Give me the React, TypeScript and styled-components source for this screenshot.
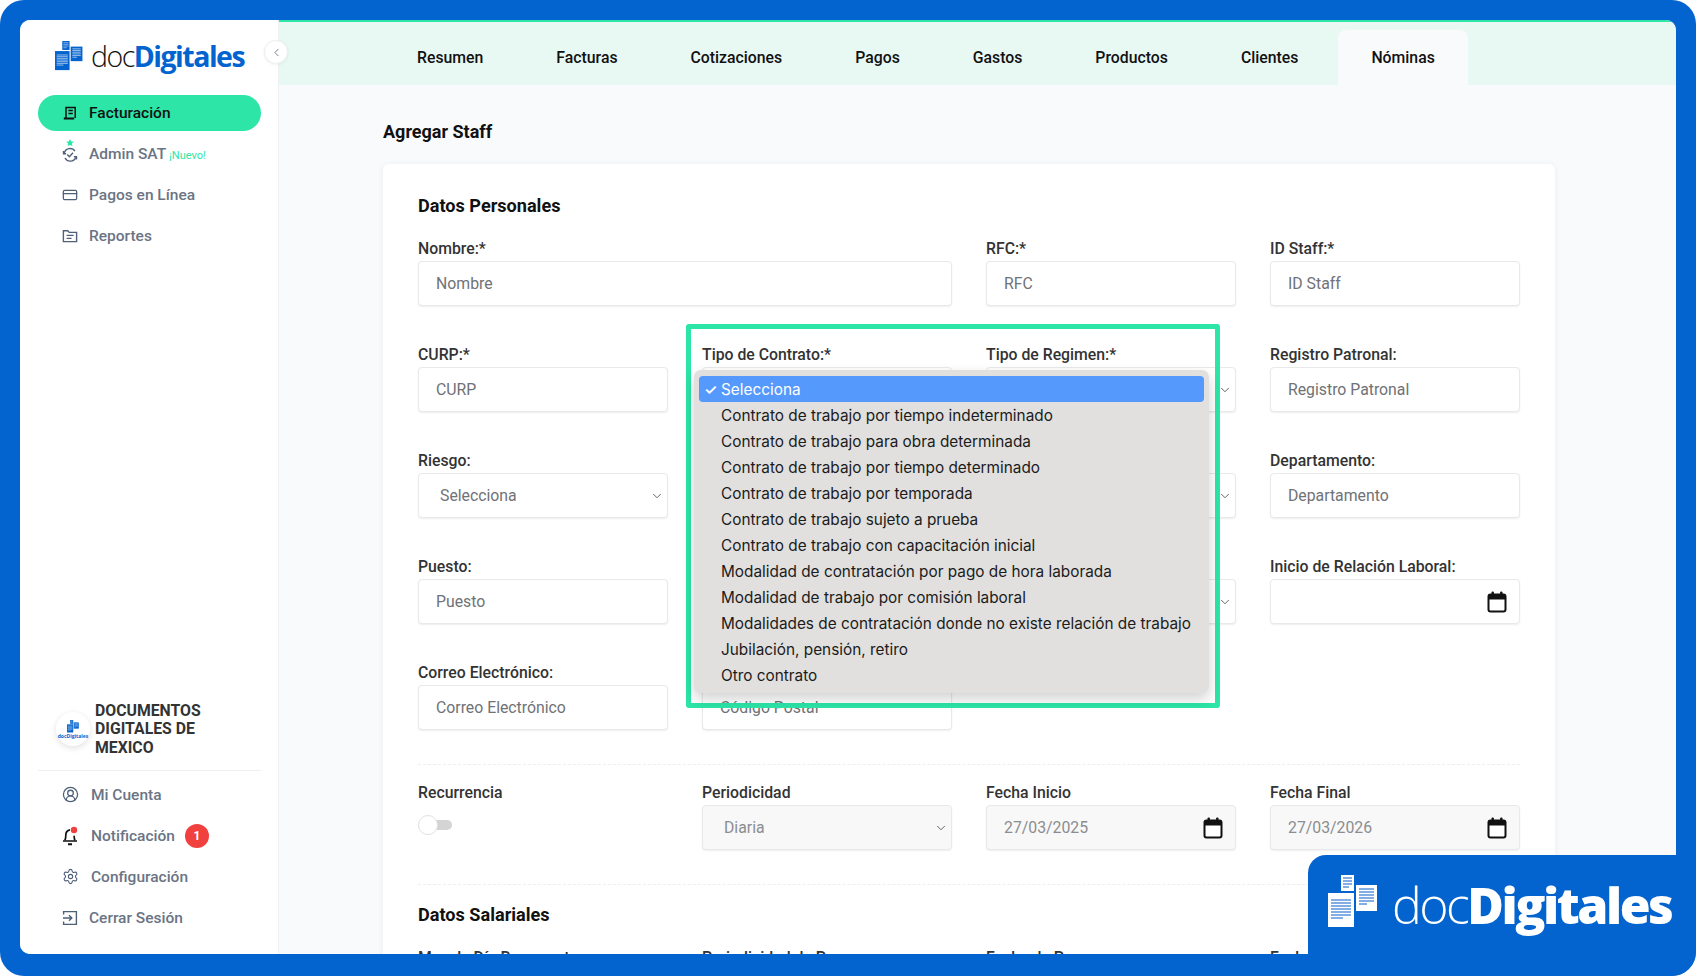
import { ReactNode } from "react";
import styled, { createGlobalStyle } from "styled-components";
import { ChevronDown, ChevronLeft, CircleUserRound, CreditCard, Settings } from "lucide-react";

const GlobalStyle = createGlobalStyle`
  html, body {
    margin: 0;
    padding: 0;
    background: #fff;
    font-family: Roboto, "Liberation Sans", sans-serif;
  }
  * {
    box-sizing: border-box;
  }
  svg {
    flex-shrink: 0;
  }
`;

const BLUE = "#0364CF";
const GREEN = "#2CE5A7";
const SLATE = "#4f6079";

const contractTypes = [
  "Contrato de trabajo por tiempo indeterminado",
  "Contrato de trabajo para obra determinada",
  "Contrato de trabajo por tiempo determinado",
  "Contrato de trabajo por temporada",
  "Contrato de trabajo sujeto a prueba",
  "Contrato de trabajo con capacitación inicial",
  "Modalidad de contratación por pago de hora laborada",
  "Modalidad de trabajo por comisión laboral",
  "Modalidades de contratación donde no existe relación de trabajo",
  "Jubilación, pensión, retiro",
  "Otro contrato",
];

function DocsMark({ light, size }: { light?: boolean; size: number }) {
  const sheet = light ? "#ffffff" : BLUE;
  const line = light ? "#5b93dd" : "#9cc0ea";
  return (
    <svg width={size} height={size * 1.06} viewBox="0 0 50 53" fill="none">
      <rect x="13" y="0" width="13" height="16" fill={sheet} />
      <path d="M15 3h9M15 6h9M15 9h9M15 12h6" stroke={line} strokeWidth="1.4" />
      <rect x="0" y="18" width="26" height="34" fill={sheet} />
      <path d="M3 25h20M3 28h20M3 31h20M3 34h20M3 37h20M3 40h20M3 43h12" stroke={line} strokeWidth="1.7" />
      <rect x="28" y="10" width="21" height="26" fill={sheet} />
      <path d="M31 14h15M31 17h15M31 20h15M31 23h15M31 26h15M31 29h8" stroke={line} strokeWidth="1.7" />
    </svg>
  );
}

function CalendarIcon() {
  return (
    <svg width="20" height="22" viewBox="0 0 20 22" fill="none">
      <rect x="1.5" y="3.5" width="17" height="17" rx="2" stroke="#111" strokeWidth="2" fill="#fff" />
      <path d="M1.5 5.5a2 2 0 0 1 2-2h13a2 2 0 0 1 2 2v3h-17z" fill="#111" />
      <rect x="4.5" y="0.5" width="2.4" height="5" rx="1" fill="#111" />
      <rect x="13.1" y="0.5" width="2.4" height="5" rx="1" fill="#111" />
    </svg>
  );
}

function InvoiceIcon() {
  return (
    <svg width="16" height="16" viewBox="0 0 16 16" fill="none" stroke="#111" strokeWidth="1.5">
      <path d="M4 13V2.6h9.2V13" />
      <path d="M1.8 13.6h10.4" strokeWidth="2" />
      <path d="M6.4 5.6h4.4M6.4 8.4h4.4" />
    </svg>
  );
}

function SatIcon() {
  return (
    <svg width="16" height="24" viewBox="0 0 16 24" fill="none" stroke={SLATE} strokeWidth="1.4">
      <path d="M8 0l1.2 2.4 2.6.3-1.9 1.8.5 2.6L8 5.9l-2.4 1.2.5-2.6-1.9-1.8 2.6-.3z" fill={GREEN} stroke="none" />
      <path d="M2.2 14.5A6 6 0 0 1 13 12M13.8 18.5A6 6 0 0 1 3 19" />
      <path d="M5.2 15.6l2.2 2.2 3.6-4" />
      <path d="M1.5 12v2.8h2.6M14.5 20.5v-2.8h-2.6" />
    </svg>
  );
}

function FolderIcon() {
  return (
    <svg width="16" height="14" viewBox="0 0 16 14" fill="none" stroke={SLATE} strokeWidth="1.4">
      <path d="M1.4 12.6V1.8h4.4l1.4 1.6h7.4v9.2z" />
      <path d="M4.6 6.4h7M4.6 9.4h5" />
    </svg>
  );
}

function BellIcon() {
  return (
    <svg width="16" height="20" viewBox="0 0 16 20" fill="none" stroke="#111" strokeWidth="1.7">
      <path d="M2.8 14.4c1-1.6 1-3.2 1-5.2 0-2.8 1.6-5 4.2-5.4M13 14.4c-.9-1.4-.9-2.8-.9-4.6" />
      <path d="M1 15h14" />
      <path d="M6 18.2h4" strokeWidth="2" />
      <circle cx="12" cy="4" r="3.2" fill="#F0413F" stroke="none" />
    </svg>
  );
}

function LogoutIcon() {
  return (
    <svg width="16" height="16" viewBox="0 0 16 16" fill="none" stroke={SLATE} strokeWidth="1.4">
      <path d="M1.6 4.6V1.6h12.8v12.8H1.6v-3" />
      <path d="M1 8h8.6M7 5.2L9.8 8 7 10.8" />
    </svg>
  );
}

const Frame = styled.div`
  position: relative;
  width: 1696px;
  height: 976px;
  padding: 20px 20px 22px 20px;
  background: ${BLUE};
  border-radius: 24px;
  overflow: hidden;
`;

const Window = styled.div`
  display: flex;
  height: 100%;
  border-radius: 10px;
  overflow: hidden;
  background: #f9fafc;
`;

const Sidebar = styled.aside`
  position: relative;
  display: flex;
  flex-direction: column;
  flex: 0 0 259px;
  padding: 18px 17px 16px 18px;
  background: #fff;
  border-right: 1px solid #eef0f3;
`;

const Brand = styled.div`
  display: flex;
  align-items: center;
  gap: 8px;
  height: 36px;
  padding-left: 17px;
  margin-bottom: 21px;
`;

const BrandText = styled.span`
  font-family: "Open Sans", sans-serif;
  font-size: 28.5px;
  line-height: 36px;
  letter-spacing: -1.5px;
  color: #111;
  font-weight: 300;
`;

const BrandStrong = styled.span`
  font-weight: 700;
  color: ${BLUE};
`;

const CollapseButton = styled.button`
  position: absolute;
  z-index: 2;
  top: 20px;
  right: -10px;
  display: flex;
  align-items: center;
  justify-content: center;
  width: 24px;
  height: 24px;
  padding: 0;
  border: 1px solid #eceef1;
  border-radius: 50%;
  background: #fff;
  color: #5b6470;
  box-shadow: 0 1px 3px rgba(0, 0, 0, 0.06);
`;

const NavList = styled.nav`
  display: flex;
  flex-direction: column;
`;

const NavItem = styled.a<{ $active?: boolean; $gap?: number }>`
  display: flex;
  align-items: center;
  height: ${(p) => (p.$active ? "36px" : "41px")};
  margin-bottom: ${(p) => (p.$active ? "2.5px" : "0")};
  padding-left: 25px;
  gap: ${(p) => p.$gap ?? 12}px;
  border-radius: 18px;
  background: ${(p) => (p.$active ? GREEN : "transparent")};
  color: ${(p) => (p.$active ? "#111" : "#6a7484")};
  font-size: 15.5px;
  font-weight: 500;
`;

const NavIcon = styled.span<{ $lift?: number }>`
  display: flex;
  align-items: center;
  justify-content: center;
  width: 14px;
  margin-bottom: ${(p) => p.$lift ?? 0}px;
  color: ${SLATE};
`;

const NewTag = styled.small`
  margin-left: -9px;
  margin-top: 3px;
  font-size: 11px;
  font-weight: 400;
  color: ${GREEN};
`;

const Spacer = styled.div`
  flex: 1;
`;

const Company = styled.div`
  display: flex;
  align-items: center;
  gap: 5px;
  padding: 0 0 13px 18px;
  border-bottom: 1px solid #eef0f3;
  margin-bottom: 3px;
`;

const CompanyLogo = styled.div`
  display: flex;
  flex-direction: column;
  align-items: center;
  justify-content: center;
  flex: 0 0 34px;
  height: 34px;
  border-radius: 50%;
  background: #fff;
  box-shadow: 0 2px 6px rgba(0, 0, 0, 0.12);
  font-family: "Open Sans", sans-serif;
  font-size: 5px;
  line-height: 6px;
  font-weight: 700;
  color: ${BLUE};
`;

const CompanyName = styled.div`
  font-size: 15.8px;
  line-height: 18.5px;
  font-weight: 700;
  color: #333;
`;

const Badge = styled.span`
  display: flex;
  align-items: center;
  justify-content: center;
  width: 24px;
  height: 24px;
  margin-left: -4px;
  border-radius: 50%;
  background: #f0413f;
  color: #fff;
  font-size: 12px;
  font-weight: 700;
`;

const Main = styled.main`
  position: relative;
  display: flex;
  flex-direction: column;
  flex: 1;
  min-width: 0;
  border-top: 2px solid ${GREEN};
  overflow: hidden;
`;

const TabBar = styled.div`
  display: flex;
  align-items: flex-end;
  gap: 7px;
  flex: 0 0 63px;
  padding-left: 105px;
  background: #e8f8f3;
`;

const Tab = styled.a<{ $active?: boolean }>`
  display: flex;
  align-items: center;
  justify-content: center;
  height: 55px;
  padding: 0 33px 0;
  border-radius: 8px 8px 0 0;
  background: ${(p) => (p.$active ? "#f9fafc" : "transparent")};
  color: #111;
  font-size: 15.8px;
  font-weight: 500;
`;

const Content = styled.div`
  padding: 35px 0 0 104px;
`;

const PageTitle = styled.h1`
  margin: 0 0 21px;
  font-size: 18px;
  line-height: 23px;
  font-weight: 700;
  color: #111;
`;

const Card = styled.section`
  position: relative;
  width: 1172px;
  padding: 30px 35px 40px;
  background: #fff;
  border-radius: 6px;
  box-shadow: 0 1px 6px rgba(30, 40, 60, 0.07);
`;

const SectionTitle = styled.h2`
  margin: 0 0 21px;
  font-size: 18.1px;
  line-height: 24px;
  font-weight: 700;
  color: #111;
`;

const FormGrid = styled.div`
  display: grid;
  grid-template-columns: repeat(4, 250px);
  column-gap: 34px;
  row-gap: 39px;
`;

const Field = styled.div<{ $span?: number }>`
  grid-column: span ${(p) => p.$span ?? 1};
  min-width: 0;
`;

const Label = styled.label`
  display: block;
  height: 20px;
  margin-bottom: 2px;
  font-size: 15.8px;
  line-height: 20px;
  font-weight: 500;
  color: #333;
  white-space: nowrap;
`;

const Control = styled.div<{ $disabled?: boolean; $select?: boolean }>`
  display: flex;
  align-items: center;
  height: 45px;
  padding: 0 ${(p) => (p.$select ? 3 : 12)}px 0 ${(p) => (p.$select ? 21 : 17)}px;
  border: 1px solid #e8e9eb;
  border-radius: 4px;
  background: ${(p) => (p.$disabled ? "#f8f8f8" : "#fff")};
  box-shadow: 0 1px 2px rgba(0, 0, 0, 0.07);
  color: ${(p) => (p.$disabled ? "#8b8d90" : "#6f7276")};
  font-size: 15.8px;

  svg {
    margin-left: auto;
  }
`;

const ToggleTrack = styled.div`
  position: relative;
  width: 34px;
  height: 10px;
  margin-top: 17px;
  border-radius: 5px;
  background: #d4d4d4;
`;

const ToggleKnob = styled.span`
  position: absolute;
  top: -5px;
  left: 0;
  width: 20px;
  height: 20px;
  border: 1px solid #e2e2e2;
  border-radius: 50%;
  background: #fff;
`;

const Divider = styled.hr`
  margin: 34px 0 18px;
  border: none;
  border-top: 1px dashed #eceef0;
`;

const HighlightBox = styled.div`
  position: absolute;
  left: 303px;
  top: 160px;
  width: 534px;
  height: 384px;
  border: 5px solid ${GREEN};
  border-radius: 3px;
  pointer-events: none;
`;

const Dropdown = styled.ul`
  position: absolute;
  left: 311px;
  top: 206px;
  width: 515px;
  height: 323px;
  margin: 0;
  padding: 6px 5px;
  list-style: none;
  background: #e1e0de;
  border-radius: 7px;
  box-shadow: 0 6px 14px rgba(0, 0, 0, 0.18);
`;

const Option = styled.li<{ $selected?: boolean }>`
  position: relative;
  height: 26px;
  padding-left: 22px;
  border-radius: 4px;
  background: ${(p) => (p.$selected ? "#5599fc" : "transparent")};
  color: ${(p) => (p.$selected ? "#fff" : "#1b1b1b")};
  font-family: Inter, sans-serif;
  font-size: 15.35px;
  line-height: 28px;
  white-space: nowrap;
`;

const Check = styled.span`
  position: absolute;
  left: 5px;
  top: 0;
  font-size: 15px;
  font-weight: 600;
`;

const Promo = styled.div`
  position: absolute;
  right: 0;
  bottom: 0;
  display: flex;
  align-items: flex-start;
  gap: 14px;
  width: 388px;
  height: 121px;
  padding: 20px 0 0 20px;
  background: ${BLUE};
  border-radius: 18px 0 24px 0;
`;

const PromoText = styled.span`
  margin-top: -3px;
  font-family: "Open Sans", sans-serif;
  font-size: 50px;
  line-height: 66px;
  letter-spacing: -2.5px;
  font-weight: 300;
  color: #fff;
`;

const PromoStrong = styled.span`
  font-weight: 800;
`;

function TextField({ label, placeholder, span }: { label: string; placeholder?: string; span?: number }) {
  return (
    <Field $span={span}>
      <Label>{label}</Label>
      <Control>{placeholder ?? label.replace(/:\*?$/, "")}</Control>
    </Field>
  );
}

function SelectField({ label, value, disabled }: { label?: string; value?: string; disabled?: boolean }) {
  return (
    <Field>
      <Label>{label ?? "\u00a0"}</Label>
      <Control $select $disabled={disabled}>
        {value ?? ""}
        <ChevronDown size={14} strokeWidth={1.4} color="#444" />
      </Control>
    </Field>
  );
}

function DateField({ label, value, disabled }: { label: string; value?: string; disabled?: boolean }) {
  return (
    <Field>
      <Label>{label}</Label>
      <Control $disabled={disabled}>
        {value ?? ""}
        <CalendarIcon />
      </Control>
    </Field>
  );
}

function SideLink({ icon, children, gap, lift }: { icon: ReactNode; children: ReactNode; gap?: number; lift?: number }) {
  return (
    <NavItem $gap={gap}>
      <NavIcon $lift={lift}>{icon}</NavIcon>
      {children}
    </NavItem>
  );
}

export default function App() {
  const tabs = ["Resumen", "Facturas", "Cotizaciones", "Pagos", "Gastos", "Productos", "Clientes", "Nóminas"];

  return (
    <Frame>
      <GlobalStyle />
      <Window>
        <Sidebar>
          <Brand>
            <DocsMark size={28} />
            <BrandText>
              doc<BrandStrong>Digitales</BrandStrong>
            </BrandText>
          </Brand>
          <CollapseButton>
            <ChevronLeft size={13} strokeWidth={1.5} />
          </CollapseButton>
          <NavList>
            <NavItem $active>
              <NavIcon>
                <InvoiceIcon />
              </NavIcon>
              Facturación
            </NavItem>
            <SideLink icon={<SatIcon />} lift={6}>
              Admin SAT <NewTag>¡Nuevo!</NewTag>
            </SideLink>
            <SideLink icon={<CreditCard size={16} strokeWidth={1.9} />}>Pagos en Línea</SideLink>
            <SideLink icon={<FolderIcon />}>Reportes</SideLink>
          </NavList>
          <Spacer />
          <Company>
            <CompanyLogo>
              <DocsMark size={12} />
              docDigitales
            </CompanyLogo>
            <CompanyName>
              DOCUMENTOS
              <br />
              DIGITALES DE
              <br />
              MEXICO
            </CompanyName>
          </Company>
          <NavList>
            <SideLink icon={<CircleUserRound size={17} strokeWidth={1.8} />} gap={14}>
              Mi Cuenta
            </SideLink>
            <SideLink icon={<BellIcon />} gap={14}>
              Notificación <Badge>1</Badge>
            </SideLink>
            <SideLink icon={<Settings size={17} strokeWidth={1.6} />} gap={14}>
              Configuración
            </SideLink>
            <SideLink icon={<LogoutIcon />}>Cerrar Sesión</SideLink>
          </NavList>
        </Sidebar>
        <Main>
          <TabBar>
            {tabs.map((t) => (
              <Tab key={t} $active={t === "Nóminas"}>
                {t}
              </Tab>
            ))}
          </TabBar>
          <Content>
            <PageTitle>Agregar Staff</PageTitle>
            <Card>
              <SectionTitle>Datos Personales</SectionTitle>
              <FormGrid>
                <TextField label="Nombre:*" span={2} />
                <TextField label="RFC:*" />
                <TextField label="ID Staff:*" />

                <TextField label="CURP:*" />
                <SelectField label="Tipo de Contrato:*" />
                <SelectField label="Tipo de Regimen:*" />
                <TextField label="Registro Patronal:" />

                <SelectField label="Riesgo:" value="Selecciona" />
                <SelectField />
                <SelectField />
                <TextField label="Departamento:" />

                <TextField label="Puesto:" />
                <SelectField />
                <SelectField />
                <DateField label="Inicio de Relación Laboral:" />

                <TextField label="Correo Electrónico:" />
                <TextField label={"\u00a0"} placeholder="Código Postal" />
              </FormGrid>
              <Divider />
              <FormGrid>
                <Field>
                  <Label>Recurrencia</Label>
                  <ToggleTrack>
                    <ToggleKnob />
                  </ToggleTrack>
                </Field>
                <SelectField label="Periodicidad" value="Diaria" disabled />
                <DateField label="Fecha Inicio" value="27/03/2025" disabled />
                <DateField label="Fecha Final" value="27/03/2026" disabled />
              </FormGrid>
              <Divider />
              <SectionTitle>Datos Salariales</SectionTitle>
              <FormGrid>
                <Label>Mes de Día Recurrente</Label>
                <Label>Periodicidad de Pago</Label>
                <Label>Fecha de Pago</Label>
                <Label>Fecha de Alta</Label>
              </FormGrid>
              <HighlightBox />
              <Dropdown>
                <Option $selected>
                  <Check>✓</Check>
                  Selecciona
                </Option>
                {contractTypes.map((c) => (
                  <Option key={c}>{c}</Option>
                ))}
              </Dropdown>
            </Card>
          </Content>
        </Main>
      </Window>
      <Promo>
        <DocsMark light size={50} />
        <PromoText>
          doc<PromoStrong>Digitales</PromoStrong>
        </PromoText>
      </Promo>
    </Frame>
  );
}
